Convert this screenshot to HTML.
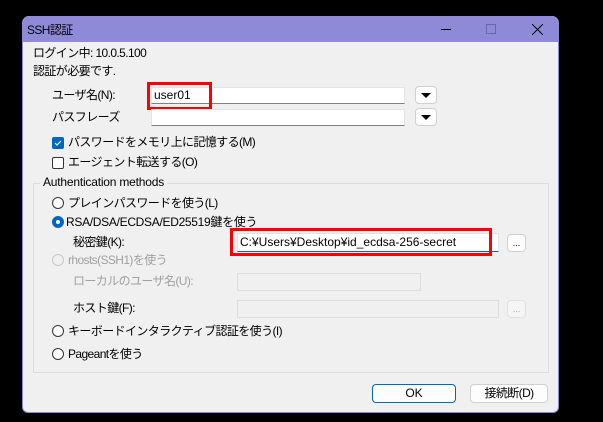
<!DOCTYPE html>
<html><head><meta charset="utf-8"><style>
*{margin:0;padding:0;box-sizing:border-box}
body{width:603px;height:422px;background:#000;position:relative;overflow:hidden;font-family:"Liberation Sans","Noto Sans CJK JP",sans-serif;font-size:12px;color:#000}
.a{position:absolute;white-space:nowrap;line-height:14px;letter-spacing:-0.6px}
.l{letter-spacing:0}
.win{position:absolute;left:22px;top:16px;width:537px;height:397px;background:#f0f0f0;border:1px solid #8e8ad8;border-top:none;border-radius:7px 7px 6px 6px;overflow:hidden}
.tb{position:absolute;left:0;top:0;width:537px;height:26px;background:#8e8ad8}
.in{position:absolute;background:#fff;border:1px solid #e4e4e4;border-bottom:1px solid #808080}
.dis{position:absolute;background:#f0f0f0;border:1px solid #dcdcdc}
.btn{position:absolute;background:#fdfdfd;border:1px solid #d0d0d0;border-radius:4px;text-align:center}
.red{position:absolute;border:3px solid #f00}
.rad{position:absolute;width:12px;height:12px;border:1px solid #333;border-radius:50%;background:#fff}
.g{color:#a0a0a0}
</style></head><body>
<div class="win">
<div class="tb"></div>
<div class="a" style="left:4px;top:7px">SSH認証</div>
<div style="position:absolute;left:418px;top:13px;width:10px;height:1px;background:#000"></div>
<div style="position:absolute;left:463px;top:8px;width:10px;height:10px;border:1px solid #6a68a8"></div>
<svg style="position:absolute;left:509px;top:8px" width="11" height="11"><path d="M0 0L11 11M11 0L0 11" stroke="#000" stroke-width="1"/></svg>
</div>
<div class="a" style="left:33px;top:46px">ログイン中: 10.0.5.100</div>
<div class="a" style="left:33px;top:64px">認証が必要です.</div>
<div class="a" style="left:52px;top:88px">ユーザ名(N):</div>
<div class="in" style="left:151px;top:87px;width:254px;height:17px"></div>
<div class="a l" style="left:154px;top:88px">user01</div>
<div class="red" style="left:147px;top:82px;width:65px;height:28px"></div>
<div class="btn" style="left:415px;top:86px;width:22px;height:18px"><svg width="12" height="8" style="margin-top:5px"><path d="M1 1L11 1L6 6Z" fill="#000"/></svg></div>
<div class="a" style="left:52px;top:110px">パスフレーズ</div>
<div class="in" style="left:151px;top:109px;width:254px;height:17px"></div>
<div class="btn" style="left:415px;top:108px;width:22px;height:18px"><svg width="12" height="8" style="margin-top:5px"><path d="M1 1L11 1L6 6Z" fill="#000"/></svg></div>
<div style="position:absolute;left:52px;top:137px;width:12px;height:12px;background:#0067c0;border-radius:2px"><svg width="12" height="12" style="position:absolute;left:0;top:0"><path d="M3 6L5 8L9 4" stroke="#fff" stroke-width="1.2" fill="none"/></svg></div>
<div class="a" style="left:68px;top:135px">パスワードをメモリ上に記憶する(M)</div>
<div style="position:absolute;left:52px;top:157px;width:12px;height:12px;border:1px solid #333;border-radius:2px;background:#fff"></div>
<div class="a" style="left:68px;top:155px">エージェント転送する(O)</div>
<div style="position:absolute;left:33px;top:183px;width:516px;height:190px;border:1px solid #dcdcdc"></div>
<div class="a" style="left:40px;top:175px;background:#f0f0f0;padding:0 3px;letter-spacing:-0.2px">Authentication methods</div>
<div class="rad" style="left:52px;top:197px"></div><div class="a" style="left:68px;top:196px">プレインパスワードを使う(L)</div>
<div class="rad" style="left:52px;top:216px;border:4px solid #0067c0"></div><div class="a" style="left:66px;top:215px;letter-spacing:-0.3px">RSA/DSA/ECDSA/ED25519鍵を使う</div>
<div class="a" style="left:73px;top:235px">秘密鍵(K):</div>
<div class="in" style="left:237px;top:233px;width:262px;height:19px;border-bottom:1px solid #0067c0"></div>
<div class="a l" style="left:240px;top:235px">C:¥Users¥Desktop¥id_ecdsa-256-secret</div>
<div class="red" style="left:230px;top:228px;width:262px;height:28px"></div>
<div class="btn" style="left:507px;top:234px;width:19px;height:18px;font-size:9px;line-height:16px">...</div>
<div class="rad" style="left:52px;top:254px;border-color:#c8c8c8;background:#f0f0f0"></div><div class="a g" style="left:68px;top:253px">rhosts(SSH1)を使う</div>
<div class="a g" style="left:73px;top:274px">ローカルのユーザ名(U):</div>
<div class="dis" style="left:237px;top:273px;width:184px;height:18px"></div>
<div class="a" style="left:73px;top:301px">ホスト鍵(F):</div>
<div class="dis" style="left:237px;top:300px;width:262px;height:18px"></div>
<div class="btn" style="left:507px;top:300px;width:19px;height:18px;background:#f5f5f5;border-color:#e0e0e0;color:#aaa;font-size:9px;line-height:16px">...</div>
<div class="rad" style="left:52px;top:325px"></div><div class="a" style="left:68px;top:324px">キーボードインタラクティブ認証を使う(I)</div>
<div class="rad" style="left:52px;top:348px"></div><div class="a" style="left:68px;top:347px">Pageantを使う</div>
<div class="btn" style="left:372px;top:384px;width:84px;height:19px;border:1px solid #0067c0;line-height:17px">OK</div>
<div class="btn" style="left:470px;top:384px;width:78px;height:19px;line-height:17px;letter-spacing:-0.6px">接続断(D)</div>
</body></html>
